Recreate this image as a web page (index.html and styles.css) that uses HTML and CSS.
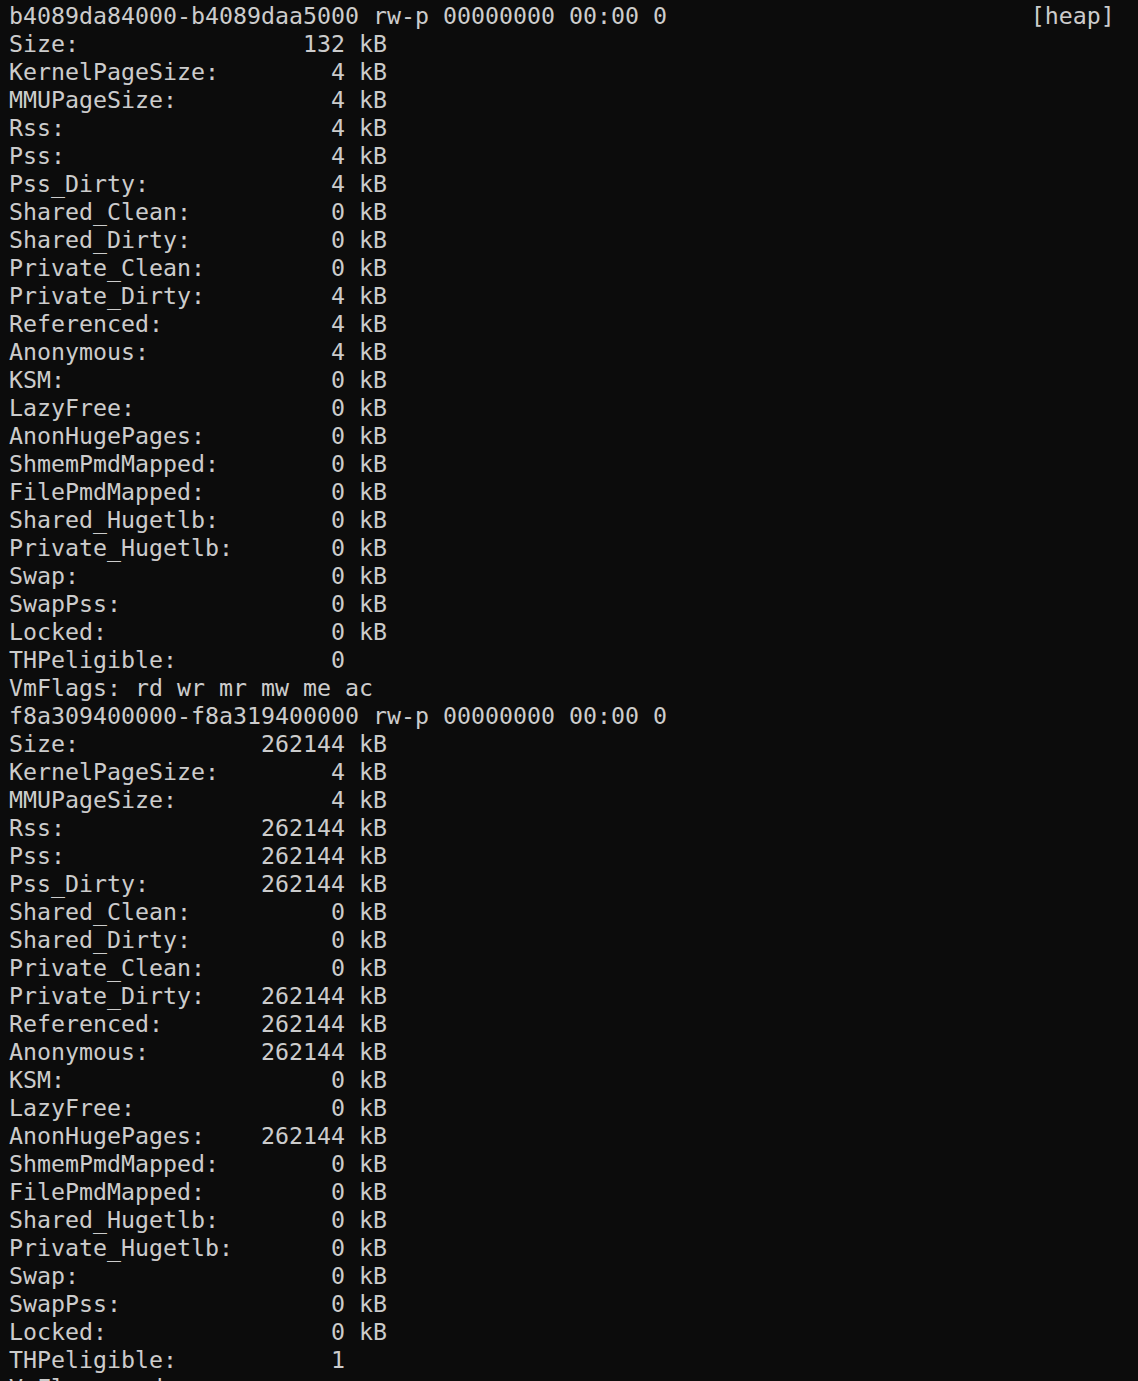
FILE: index.html
```html
<!DOCTYPE html>
<html>
<head>
<meta charset="utf-8">
<link rel="stylesheet" href="styles.css">
</head>
<body>
<pre class="term">b4089da84000-b4089daa5000 rw-p 00000000 00:00 0                          [heap]
Size:                132 kB
KernelPageSize:        4 kB
MMUPageSize:           4 kB
Rss:                   4 kB
Pss:                   4 kB
Pss_Dirty:             4 kB
Shared_Clean:          0 kB
Shared_Dirty:          0 kB
Private_Clean:         0 kB
Private_Dirty:         4 kB
Referenced:            4 kB
Anonymous:             4 kB
KSM:                   0 kB
LazyFree:              0 kB
AnonHugePages:         0 kB
ShmemPmdMapped:        0 kB
FilePmdMapped:         0 kB
Shared_Hugetlb:        0 kB
Private_Hugetlb:       0 kB
Swap:                  0 kB
SwapPss:               0 kB
Locked:                0 kB
THPeligible:           0
VmFlags: rd wr mr mw me ac
f8a309400000-f8a319400000 rw-p 00000000 00:00 0
Size:             262144 kB
KernelPageSize:        4 kB
MMUPageSize:           4 kB
Rss:              262144 kB
Pss:              262144 kB
Pss_Dirty:        262144 kB
Shared_Clean:          0 kB
Shared_Dirty:          0 kB
Private_Clean:         0 kB
Private_Dirty:    262144 kB
Referenced:       262144 kB
Anonymous:        262144 kB
KSM:                   0 kB
LazyFree:              0 kB
AnonHugePages:    262144 kB
ShmemPmdMapped:        0 kB
FilePmdMapped:         0 kB
Shared_Hugetlb:        0 kB
Private_Hugetlb:       0 kB
Swap:                  0 kB
SwapPss:               0 kB
Locked:                0 kB
THPeligible:           1
VmFlags: rd wr mr mw me ac</pre>
</body>
</html>
```
FILE: styles.css
```css
html, body {
  margin: 0;
  padding: 0;
  background: #0c0c0c;
  height: 100%;
  overflow: hidden;
}
.term {
  margin: 0;
  padding: 2px 0 0 9px;
  font-family: "DejaVu Sans Mono", "Liberation Mono", monospace;
  font-size: 23.254px;
  line-height: 28px;
  color: #cccccc;
  white-space: pre;
}
```
